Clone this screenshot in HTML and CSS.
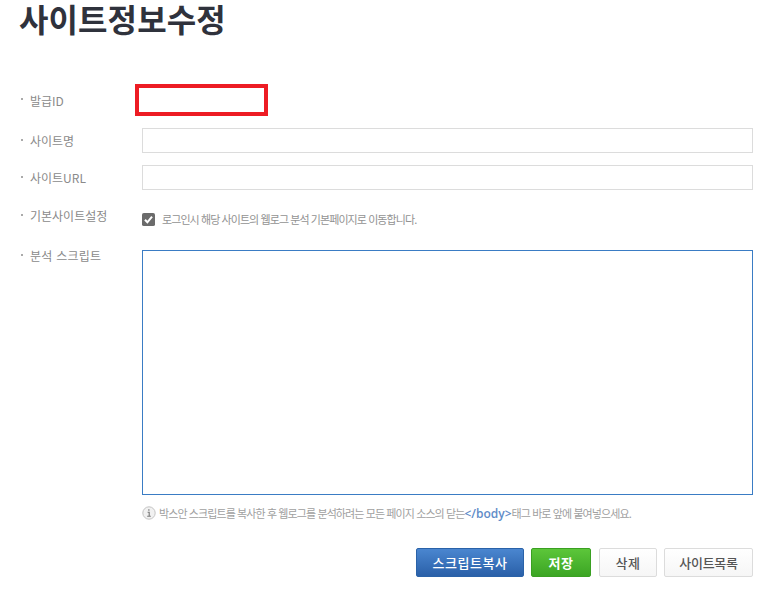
FILE: index.html
```html
<!DOCTYPE html>
<html lang="ko">
<head>
<meta charset="utf-8">
<title>사이트정보수정</title>
<link rel="stylesheet" href="styles.css">
</head>
<body>
<h1 class="title">사이트정보수정</h1>
<form class="form">
  <div class="row row-id">
    <span class="label">발급ID</span>
    <div class="id-box"></div>
  </div>
  <div class="row row-name">
    <span class="label">사이트명</span>
    <input class="field" type="text">
  </div>
  <div class="row row-url">
    <span class="label">사이트URL</span>
    <input class="field" type="text">
  </div>
  <div class="row row-default">
    <span class="label">기본사이트설정</span>
    <div class="check-line">
      <svg class="check" width="13" height="13" viewBox="0 0 14 14"><rect width="14" height="14" rx="2" fill="#6b6b6b"/><path d="M3.2 7.2 5.8 10 10.8 3.8" fill="none" stroke="#fff" stroke-width="2.2"/></svg>
      <span class="check-text">로그인시 해당 사이트의 웹로그 분석 기본페이지로 이동합니다.</span>
    </div>
  </div>
  <div class="row row-script">
    <span class="label">분석 스크립트</span>
    <div class="script-col">
      <div class="script-box"></div>
    </div>
  </div>
  <p class="hint">
    <svg class="info" width="14" height="14" viewBox="0 0 14 14"><circle cx="7" cy="7" r="6.2" fill="#f1f1f1" stroke="#c4c4c4"/><path d="M5.6 6.2h1.6v3.8M5.2 10.3h3.6" fill="none" stroke="#777" stroke-width="1.1"/><rect x="6.2" y="3.3" width="1.3" height="1.4" fill="#777"/></svg>
    <span>박스안 스크립트를 복사한 후 웹로그를 분석하려는 모든 페이지 소스의 닫는<b class="code">&lt;/body&gt;</b>태그 바로 앞에 붙여넣으세요.</span>
  </p>
  <div class="actions">
    <button class="btn btn-blue" type="button">스크립트복사</button>
    <button class="btn btn-green" type="button">저장</button>
    <button class="btn btn-plain btn-del" type="button">삭제</button>
    <button class="btn btn-plain btn-list" type="button">사이트목록</button>
  </div>
</form>
</body>
</html>
```
FILE: styles.css
```css
* { box-sizing: border-box; }
html, body { margin: 0; padding: 0; }
body {
  width: 773px;
  height: 600px;
  overflow: hidden;
  background: #fff;
  font-family: "Noto Sans CJK KR", "Noto Sans", sans-serif;
  color: #777;
}
.title {
  margin: 0;
  padding-left: 19px;
  height: 84px;
  font-size: 32px;
  line-height: 36px;
  font-weight: 700;
  letter-spacing: 0.1px;
  color: #2f323c;
}
.form { padding: 0 20px 0 20px; }
.row { display: flex; align-items: flex-start; }
.label {
  width: 122px;
  flex: none;
  font-size: 12px;
  line-height: 16px;
  color: #8a8a8a;
  padding-left: 10px;
  position: relative;
}
.label::before {
  content: "";
  position: absolute;
  left: 1px;
  top: 6px;
  width: 2px;
  height: 2px;
  background: #aaa;
}
.row-id { height: 44px; }
.row-id .label { padding-top: 9px; height: 31px; width: 115px; }
.row-id .label::before { top: 14px; }
.id-box { width: 133px; height: 32px; border: 4.5px solid #ed1c24; }
.row-name { height: 37px; }
.row-name .label { padding-top: 5px; }
.row-name .label::before { top: 11px; }
.row-url { height: 37px; }
.row-url .label { padding-top: 5px; }
.row-url .label::before { top: 11px; }
.field {
  width: 611px;
  height: 25px;
  margin: 0;
  padding: 0 6px;
  border: 1px solid #dcdcdc;
  background: #fff;
}
.row-default { height: 48px; padding-top: 7px; }
.row-default .label { margin-top: -1px; }
.check-line { display: flex; align-items: center; height: 16px; margin-top: 2px; }
.check { flex: none; margin-right: 7px; }
.check-text { font-size: 11px; line-height: 16px; letter-spacing: -0.92px; color: #929292; }
.row-script { height: 245px; }
.row-script .label { margin-top: -2px; letter-spacing: 0.25px; }
.script-col { width: 611px; }
.script-box { height: 245px; border: 1px solid #3a7cc4; background: #fff; }
.hint {
  display: flex;
  align-items: center;
  margin: 10px 0 0 122px;
  height: 16px;
  font-size: 11px;
  line-height: 16px;
  letter-spacing: -0.9px;
  color: #a0a0a0;
}
.info { flex: none; margin-right: 3px; }
.code { color: #5f8cc8; font-family: "Open Sans", sans-serif; font-size: 12px; letter-spacing: 0; font-weight: 600; }
.actions { display: flex; justify-content: flex-end; gap: 7px; margin-top: 27px; }
.btn {
  height: 29px;
  margin: 0;
  padding: 0;
  border-radius: 2px;
  font-family: inherit;
  font-size: 13px;
  line-height: 26px;
  letter-spacing: 0.5px;
  font-weight: 500;
}
.btn-blue { width: 108px; border: 1px solid #2a62a8; color: #fff; background: linear-gradient(#4a86d0, #2a60a8); }
.btn-green { width: 60px; margin-right: 1px; border: 1px solid #3aa022; color: #fff; background: linear-gradient(#5cc63a, #3ca524); font-weight: 700; }
.btn-plain { border: 1px solid #dcdcdc; color: #555; background: linear-gradient(#fff, #f6f6f6); }
.btn-del { width: 58px; }
.btn-list { width: 89px; letter-spacing: -0.3px; }
```
